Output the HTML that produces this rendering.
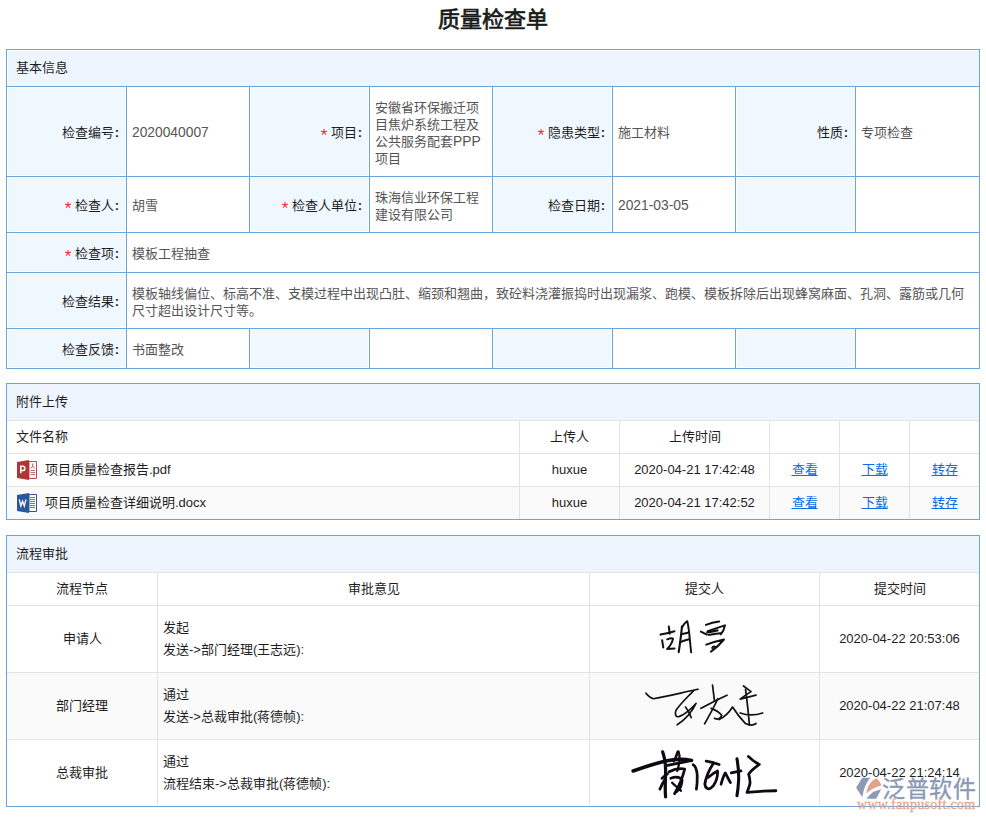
<!DOCTYPE html>
<html lang="zh-CN"><head><meta charset="utf-8"><title>质量检查单</title>
<style>
html,body{margin:0;padding:0;background:#fff}
body{width:986px;height:821px;position:relative;overflow:hidden;font-family:"Liberation Sans",sans-serif;font-size:13px;color:#333}
body>div,body>svg{position:absolute;box-sizing:border-box}
.c{display:flex;align-items:center}
.c span{display:block}
.s{display:inline-block;vertical-align:0;margin-right:4px;position:relative;top:-2px}
i.cl{font-style:normal;font-weight:bold;margin:0 7px 0 1px}
i.l{font-style:normal}
u{text-decoration:underline}
.title{left:0;top:1px;width:986px;height:40px;line-height:38px;text-align:center;font-size:22px;font-weight:normal;color:#1a1a1a;-webkit-text-stroke:0.7px #1a1a1a}
</style></head><body>
<div class="title">质量检查单</div>
<div style="left:8px;top:51px;width:971px;height:35px;background:#eef5ff;"></div>
<div class="c" style="left:7px;top:49px;width:972px;height:36px;padding:0 6px 0 9px;justify-content:flex-start;text-align:left;color:#1e1e1e;line-height:17px;"><span>基本信息</span></div>
<div style="left:8px;top:88px;width:117px;height:87px;background:#f0f8ff;"></div>
<div style="left:251px;top:88px;width:117px;height:87px;background:#f0f8ff;"></div>
<div style="left:494px;top:88px;width:117px;height:87px;background:#f0f8ff;"></div>
<div style="left:737px;top:88px;width:117px;height:87px;background:#f0f8ff;"></div>
<div style="left:8px;top:178px;width:117px;height:53px;background:#f0f8ff;"></div>
<div style="left:251px;top:178px;width:117px;height:53px;background:#f0f8ff;"></div>
<div style="left:494px;top:178px;width:117px;height:53px;background:#f0f8ff;"></div>
<div style="left:737px;top:178px;width:117px;height:53px;background:#f0f8ff;"></div>
<div style="left:8px;top:330px;width:117px;height:37px;background:#f0f8ff;"></div>
<div style="left:251px;top:330px;width:117px;height:37px;background:#f0f8ff;"></div>
<div style="left:494px;top:330px;width:117px;height:37px;background:#f0f8ff;"></div>
<div style="left:737px;top:330px;width:117px;height:37px;background:#f0f8ff;"></div>
<div style="left:8px;top:234px;width:117px;height:37px;background:#f0f8ff;"></div>
<div style="left:8px;top:274px;width:117px;height:53px;background:#f0f8ff;"></div>
<div style="left:6px;top:86px;width:974px;height:1px;background:#6aa6da;"></div>
<div style="left:6px;top:176px;width:974px;height:1px;background:#6aa6da;"></div>
<div style="left:6px;top:232px;width:974px;height:1px;background:#6aa6da;"></div>
<div style="left:6px;top:272px;width:974px;height:1px;background:#6aa6da;"></div>
<div style="left:6px;top:328px;width:974px;height:1px;background:#6aa6da;"></div>
<div style="left:126px;top:86px;width:1px;height:147px;background:#6aa6da;"></div>
<div style="left:126px;top:328px;width:1px;height:41px;background:#6aa6da;"></div>
<div style="left:249px;top:86px;width:1px;height:147px;background:#6aa6da;"></div>
<div style="left:249px;top:328px;width:1px;height:41px;background:#6aa6da;"></div>
<div style="left:369px;top:86px;width:1px;height:147px;background:#6aa6da;"></div>
<div style="left:369px;top:328px;width:1px;height:41px;background:#6aa6da;"></div>
<div style="left:492px;top:86px;width:1px;height:147px;background:#6aa6da;"></div>
<div style="left:492px;top:328px;width:1px;height:41px;background:#6aa6da;"></div>
<div style="left:612px;top:86px;width:1px;height:147px;background:#6aa6da;"></div>
<div style="left:612px;top:328px;width:1px;height:41px;background:#6aa6da;"></div>
<div style="left:735px;top:86px;width:1px;height:147px;background:#6aa6da;"></div>
<div style="left:735px;top:328px;width:1px;height:41px;background:#6aa6da;"></div>
<div style="left:855px;top:86px;width:1px;height:147px;background:#6aa6da;"></div>
<div style="left:855px;top:328px;width:1px;height:41px;background:#6aa6da;"></div>
<div style="left:126px;top:232px;width:1px;height:97px;background:#6aa6da;"></div>
<div style="left:6px;top:49px;width:974px;height:1px;background:#6aa6da;"></div>
<div style="left:6px;top:368px;width:974px;height:1px;background:#6aa6da;"></div>
<div style="left:6px;top:49px;width:1px;height:320px;background:#6aa6da;"></div>
<div style="left:979px;top:49px;width:1px;height:320px;background:#6aa6da;"></div>
<div class="c" style="left:7px;top:88px;width:119px;height:89px;padding:0 0px 0 6px;justify-content:flex-end;text-align:right;color:#1e1e1e;line-height:17px;"><span>检查编号<i class="cl"><i class="l" style="font-size:13px">:</i></i></span></div>
<div class="c" style="left:127px;top:88px;width:122px;height:89px;padding:0 6px 0 5px;justify-content:flex-start;text-align:left;color:#555;line-height:17px;"><span><i class="l" style="font-size:13.8px">2020040007</i></span></div>
<div class="c" style="left:250px;top:88px;width:119px;height:89px;padding:0 0px 0 6px;justify-content:flex-end;text-align:right;color:#1e1e1e;line-height:17px;"><span><svg class="s" width="6" height="6" viewBox="0 0 12 12"><path d="M6 0.5V6 M6 6L11.2 4.3 M6 6L9.2 10.6 M6 6L2.8 10.6 M6 6L0.8 4.3" stroke="#ff2a2a" stroke-width="2.2" stroke-linecap="round"/></svg>项目<i class="cl"><i class="l" style="font-size:13px">:</i></i></span></div>
<div class="c" style="left:370px;top:88px;width:122px;height:89px;padding:0 6px 0 5px;justify-content:flex-start;text-align:left;color:#555;line-height:17px;"><span>安徽省环保搬迁项目焦炉系统工程及公共服务配套<i class="l" style="font-size:13.8px">PPP</i>项目</span></div>
<div class="c" style="left:493px;top:88px;width:119px;height:89px;padding:0 0px 0 6px;justify-content:flex-end;text-align:right;color:#1e1e1e;line-height:17px;"><span><svg class="s" width="6" height="6" viewBox="0 0 12 12"><path d="M6 0.5V6 M6 6L11.2 4.3 M6 6L9.2 10.6 M6 6L2.8 10.6 M6 6L0.8 4.3" stroke="#ff2a2a" stroke-width="2.2" stroke-linecap="round"/></svg>隐患类型<i class="cl"><i class="l" style="font-size:13px">:</i></i></span></div>
<div class="c" style="left:613px;top:88px;width:122px;height:89px;padding:0 6px 0 5px;justify-content:flex-start;text-align:left;color:#555;line-height:17px;"><span>施工材料</span></div>
<div class="c" style="left:736px;top:88px;width:119px;height:89px;padding:0 0px 0 6px;justify-content:flex-end;text-align:right;color:#1e1e1e;line-height:17px;"><span>性质<i class="cl"><i class="l" style="font-size:13px">:</i></i></span></div>
<div class="c" style="left:856px;top:88px;width:123px;height:89px;padding:0 6px 0 5px;justify-content:flex-start;text-align:left;color:#555;line-height:17px;"><span>专项检查</span></div>
<div class="c" style="left:7px;top:178px;width:119px;height:55px;padding:0 0px 0 6px;justify-content:flex-end;text-align:right;color:#1e1e1e;line-height:17px;"><span><svg class="s" width="6" height="6" viewBox="0 0 12 12"><path d="M6 0.5V6 M6 6L11.2 4.3 M6 6L9.2 10.6 M6 6L2.8 10.6 M6 6L0.8 4.3" stroke="#ff2a2a" stroke-width="2.2" stroke-linecap="round"/></svg>检查人<i class="cl"><i class="l" style="font-size:13px">:</i></i></span></div>
<div class="c" style="left:127px;top:178px;width:122px;height:55px;padding:0 6px 0 5px;justify-content:flex-start;text-align:left;color:#555;line-height:17px;"><span>胡雪</span></div>
<div class="c" style="left:250px;top:178px;width:119px;height:55px;padding:0 0px 0 6px;justify-content:flex-end;text-align:right;color:#1e1e1e;line-height:17px;"><span><svg class="s" width="6" height="6" viewBox="0 0 12 12"><path d="M6 0.5V6 M6 6L11.2 4.3 M6 6L9.2 10.6 M6 6L2.8 10.6 M6 6L0.8 4.3" stroke="#ff2a2a" stroke-width="2.2" stroke-linecap="round"/></svg>检查人单位<i class="cl"><i class="l" style="font-size:13px">:</i></i></span></div>
<div class="c" style="left:370px;top:178px;width:122px;height:55px;padding:0 6px 0 5px;justify-content:flex-start;text-align:left;color:#555;line-height:17px;"><span>珠海信业环保工程建设有限公司</span></div>
<div class="c" style="left:493px;top:178px;width:119px;height:55px;padding:0 0px 0 6px;justify-content:flex-end;text-align:right;color:#1e1e1e;line-height:17px;"><span>检查日期<i class="cl"><i class="l" style="font-size:13px">:</i></i></span></div>
<div class="c" style="left:613px;top:178px;width:122px;height:55px;padding:0 6px 0 5px;justify-content:flex-start;text-align:left;color:#555;line-height:17px;"><span><i class="l" style="font-size:13.8px">2021-03-05</i></span></div>
<div class="c" style="left:7px;top:234px;width:119px;height:39px;padding:0 0px 0 6px;justify-content:flex-end;text-align:right;color:#1e1e1e;line-height:17px;"><span><svg class="s" width="6" height="6" viewBox="0 0 12 12"><path d="M6 0.5V6 M6 6L11.2 4.3 M6 6L9.2 10.6 M6 6L2.8 10.6 M6 6L0.8 4.3" stroke="#ff2a2a" stroke-width="2.2" stroke-linecap="round"/></svg>检查项<i class="cl"><i class="l" style="font-size:13px">:</i></i></span></div>
<div class="c" style="left:127px;top:234px;width:852px;height:39px;padding:0 6px 0 5px;justify-content:flex-start;text-align:left;color:#555;line-height:17px;"><span>模板工程抽查</span></div>
<div class="c" style="left:7px;top:274px;width:119px;height:55px;padding:0 0px 0 6px;justify-content:flex-end;text-align:right;color:#1e1e1e;line-height:17px;"><span>检查结果<i class="cl"><i class="l" style="font-size:13px">:</i></i></span></div>
<div class="c" style="left:127px;top:274px;width:852px;height:55px;padding:0 6px 0 5px;justify-content:flex-start;text-align:left;color:#555;line-height:17px;"><span>模板轴线偏位、标高不准、支模过程中出现凸肚、缩颈和翘曲，致砼料浇灌振捣时出现漏浆、跑模、模板拆除后出现蜂窝麻面、孔洞、露筋或几何尺寸超出设计尺寸等。</span></div>
<div class="c" style="left:7px;top:330px;width:119px;height:39px;padding:0 0px 0 6px;justify-content:flex-end;text-align:right;color:#1e1e1e;line-height:17px;"><span>检查反馈<i class="cl"><i class="l" style="font-size:13px">:</i></i></span></div>
<div class="c" style="left:127px;top:330px;width:122px;height:39px;padding:0 6px 0 5px;justify-content:flex-start;text-align:left;color:#555;line-height:17px;"><span>书面整改</span></div>
<div style="left:7px;top:384px;width:972px;height:36px;background:#eef5ff;"></div>
<div class="c" style="left:7px;top:383px;width:972px;height:36px;padding:0 6px 0 9px;justify-content:flex-start;text-align:left;color:#1e1e1e;line-height:17px;"><span>附件上传</span></div>
<div style="left:7px;top:487px;width:972px;height:32px;background:#fafafa;"></div>
<div style="left:7px;top:420px;width:972px;height:1px;background:#e3e3e3;"></div>
<div style="left:7px;top:453px;width:972px;height:1px;background:#e3e3e3;"></div>
<div style="left:7px;top:486px;width:972px;height:1px;background:#e3e3e3;"></div>
<div style="left:519px;top:421px;width:1px;height:98px;background:#e3e3e3;"></div>
<div style="left:619px;top:421px;width:1px;height:98px;background:#e3e3e3;"></div>
<div style="left:769px;top:421px;width:1px;height:98px;background:#e3e3e3;"></div>
<div style="left:839px;top:421px;width:1px;height:98px;background:#e3e3e3;"></div>
<div style="left:909px;top:421px;width:1px;height:98px;background:#e3e3e3;"></div>
<div style="left:6px;top:383px;width:974px;height:1px;background:#6aa6da;"></div>
<div style="left:6px;top:519px;width:974px;height:1px;background:#6aa6da;"></div>
<div style="left:6px;top:383px;width:1px;height:137px;background:#6aa6da;"></div>
<div style="left:979px;top:383px;width:1px;height:137px;background:#6aa6da;"></div>
<div class="c" style="left:7px;top:420px;width:512px;height:32px;padding:0 6px 0 9px;justify-content:flex-start;text-align:left;color:#1e1e1e;line-height:17px;"><span>文件名称</span></div>
<div class="c" style="left:520px;top:420px;width:99px;height:32px;padding:0 0px 0 0px;justify-content:center;text-align:center;color:#1e1e1e;line-height:17px;"><span>上传人</span></div>
<div class="c" style="left:620px;top:420px;width:149px;height:32px;padding:0 0px 0 0px;justify-content:center;text-align:center;color:#1e1e1e;line-height:17px;"><span>上传时间</span></div>
<svg width="20" height="20" viewBox="0 0 20 20" style="position:absolute;left:17px;top:460px">
<path d="M12 1.5 H19.5 V18.5 H12 Z" fill="#fff" stroke="#c0504d" stroke-width="1"/>
<path d="M13.5 10.5 H18 M13.5 12.5 H18 M13.5 14.5 H18" stroke="#c46a6a" stroke-width="1"/>
<path d="M15.7 3.5 V6.5 M13.8 8 L15.7 6.5 L17.6 8" stroke="#c0504d" stroke-width="1" fill="none"/>
<path d="M0 2 L12 0 V20 L0 18 Z" fill="#ad3737"/>
<path d="M3.8 13.2 V6.3 H5.8 Q7.8 6.3 7.8 8.4 Q7.8 10.5 5.8 10.5 H4.5" stroke="#fff" stroke-width="1.5" fill="none"/>
</svg>
<svg width="20" height="20" viewBox="0 0 20 20" style="position:absolute;left:17px;top:493px">
<path d="M12 1.5 H19.5 V18.5 H12 Z" fill="#fff" stroke="#2b579a" stroke-width="1"/>
<path d="M13 4.5 H18 M13 6.5 H18 M13 8.5 H18 M13 10.5 H18 M13 12.5 H18 M13 14.5 H18" stroke="#5a7bb5" stroke-width="1"/>
<path d="M0 2 L12 0 V20 L0 18 Z" fill="#2b579a"/>
<path d="M2.3 6.5 L3.9 13 L5.6 8.2 L7.3 13 L8.9 6.5" stroke="#fff" stroke-width="1.3" fill="none"/>
</svg>
<div class="c" style="left:7px;top:453px;width:512px;height:32px;padding:0 6px 0 38px;justify-content:flex-start;text-align:left;color:#1e1e1e;line-height:17px;"><span>项目质量检查报告<i class="l" style="font-size:13px">.pdf</i></span></div>
<div class="c" style="left:520px;top:453px;width:99px;height:32px;padding:0 0px 0 0px;justify-content:center;text-align:center;color:#1e1e1e;line-height:17px;"><span><i class="l" style="font-size:13px">huxue</i></span></div>
<div class="c" style="left:620px;top:453px;width:149px;height:32px;padding:0 0px 0 0px;justify-content:center;text-align:center;color:#1e1e1e;line-height:17px;"><span><i class="l" style="font-size:13px">2020-04-21 17:42:48</i></span></div>
<div class="c" style="left:770px;top:453px;width:69px;height:32px;padding:0 0px 0 0px;justify-content:center;text-align:center;color:#0a6ee4;line-height:17px;"><span><u>查看</u></span></div>
<div class="c" style="left:840px;top:453px;width:69px;height:32px;padding:0 0px 0 0px;justify-content:center;text-align:center;color:#0a6ee4;line-height:17px;"><span><u>下载</u></span></div>
<div class="c" style="left:910px;top:453px;width:69px;height:32px;padding:0 0px 0 0px;justify-content:center;text-align:center;color:#0a6ee4;line-height:17px;"><span><u>转存</u></span></div>
<div class="c" style="left:7px;top:486px;width:512px;height:32px;padding:0 6px 0 38px;justify-content:flex-start;text-align:left;color:#1e1e1e;line-height:17px;"><span>项目质量检查详细说明<i class="l" style="font-size:13px">.docx</i></span></div>
<div class="c" style="left:520px;top:486px;width:99px;height:32px;padding:0 0px 0 0px;justify-content:center;text-align:center;color:#1e1e1e;line-height:17px;"><span><i class="l" style="font-size:13px">huxue</i></span></div>
<div class="c" style="left:620px;top:486px;width:149px;height:32px;padding:0 0px 0 0px;justify-content:center;text-align:center;color:#1e1e1e;line-height:17px;"><span><i class="l" style="font-size:13px">2020-04-21 17:42:52</i></span></div>
<div class="c" style="left:770px;top:486px;width:69px;height:32px;padding:0 0px 0 0px;justify-content:center;text-align:center;color:#0a6ee4;line-height:17px;"><span><u>查看</u></span></div>
<div class="c" style="left:840px;top:486px;width:69px;height:32px;padding:0 0px 0 0px;justify-content:center;text-align:center;color:#0a6ee4;line-height:17px;"><span><u>下载</u></span></div>
<div class="c" style="left:910px;top:486px;width:69px;height:32px;padding:0 0px 0 0px;justify-content:center;text-align:center;color:#0a6ee4;line-height:17px;"><span><u>转存</u></span></div>
<div style="left:7px;top:536px;width:972px;height:36px;background:#eef5ff;"></div>
<div class="c" style="left:7px;top:535px;width:972px;height:36px;padding:0 6px 0 9px;justify-content:flex-start;text-align:left;color:#1e1e1e;line-height:17px;"><span>流程审批</span></div>
<div style="left:7px;top:673px;width:972px;height:66px;background:#fafafa;"></div>
<div style="left:7px;top:572px;width:972px;height:1px;background:#e3e3e3;"></div>
<div style="left:7px;top:605px;width:972px;height:1px;background:#e3e3e3;"></div>
<div style="left:7px;top:672px;width:972px;height:1px;background:#e3e3e3;"></div>
<div style="left:7px;top:739px;width:972px;height:1px;background:#e3e3e3;"></div>
<div style="left:157px;top:573px;width:1px;height:233px;background:#e3e3e3;"></div>
<div style="left:589px;top:573px;width:1px;height:233px;background:#e3e3e3;"></div>
<div style="left:819px;top:573px;width:1px;height:233px;background:#e3e3e3;"></div>
<div style="left:6px;top:535px;width:974px;height:1px;background:#6aa6da;"></div>
<div style="left:6px;top:806px;width:974px;height:1px;background:#6aa6da;"></div>
<div style="left:6px;top:535px;width:1px;height:272px;background:#6aa6da;"></div>
<div style="left:979px;top:535px;width:1px;height:272px;background:#6aa6da;"></div>
<div class="c" style="left:7px;top:572px;width:150px;height:32px;padding:0 0px 0 0px;justify-content:center;text-align:center;color:#1e1e1e;line-height:17px;"><span>流程节点</span></div>
<div class="c" style="left:158px;top:572px;width:431px;height:32px;padding:0 0px 0 0px;justify-content:center;text-align:center;color:#1e1e1e;line-height:17px;"><span>审批意见</span></div>
<div class="c" style="left:590px;top:572px;width:229px;height:32px;padding:0 0px 0 0px;justify-content:center;text-align:center;color:#1e1e1e;line-height:17px;"><span>提交人</span></div>
<div class="c" style="left:820px;top:572px;width:159px;height:32px;padding:0 0px 0 0px;justify-content:center;text-align:center;color:#1e1e1e;line-height:17px;"><span>提交时间</span></div>
<div class="c" style="left:7px;top:605px;width:150px;height:66px;padding:0 0px 0 0px;justify-content:center;text-align:center;color:#1e1e1e;line-height:17px;"><span>申请人</span></div>
<div class="c" style="left:158px;top:606px;width:431px;height:66px;padding:0 6px 0 5px;justify-content:flex-start;text-align:left;color:#1e1e1e;line-height:22px;"><span>发起<br>发送<i class="l" style="font-size:13px">-&gt;</i>部门经理<i class="l" style="font-size:13px">(</i>王志远<i class="l" style="font-size:13px">):</i></span></div>
<div class="c" style="left:820px;top:605px;width:159px;height:66px;padding:0 0px 0 0px;justify-content:center;text-align:center;color:#1e1e1e;line-height:17px;"><span><i class="l" style="font-size:13px">2020-04-22 20:53:06</i></span></div>
<div class="c" style="left:7px;top:672px;width:150px;height:66px;padding:0 0px 0 0px;justify-content:center;text-align:center;color:#1e1e1e;line-height:17px;"><span>部门经理</span></div>
<div class="c" style="left:158px;top:673px;width:431px;height:66px;padding:0 6px 0 5px;justify-content:flex-start;text-align:left;color:#1e1e1e;line-height:22px;"><span>通过<br>发送<i class="l" style="font-size:13px">-&gt;</i>总裁审批<i class="l" style="font-size:13px">(</i>蒋德帧<i class="l" style="font-size:13px">):</i></span></div>
<div class="c" style="left:820px;top:672px;width:159px;height:66px;padding:0 0px 0 0px;justify-content:center;text-align:center;color:#1e1e1e;line-height:17px;"><span><i class="l" style="font-size:13px">2020-04-22 21:07:48</i></span></div>
<div class="c" style="left:7px;top:739px;width:150px;height:66px;padding:0 0px 0 0px;justify-content:center;text-align:center;color:#1e1e1e;line-height:17px;"><span>总裁审批</span></div>
<div class="c" style="left:158px;top:740px;width:431px;height:66px;padding:0 6px 0 5px;justify-content:flex-start;text-align:left;color:#1e1e1e;line-height:22px;"><span>通过<br>流程结束<i class="l" style="font-size:13px">-&gt;</i>总裁审批<i class="l" style="font-size:13px">(</i>蒋德帧<i class="l" style="font-size:13px">):</i></span></div>
<div class="c" style="left:820px;top:739px;width:159px;height:66px;padding:0 0px 0 0px;justify-content:center;text-align:center;color:#1e1e1e;line-height:17px;"><span><i class="l" style="font-size:13px">2020-04-22 21:24:14</i></span></div>
<svg style="left:655px;top:615px" width="80" height="45" viewBox="0 0 986 555" fill="none" stroke="#111" stroke-linecap="round" stroke-linejoin="round">
<g stroke-width="25">
<path d="M68 242 C110 236 170 222 240 200"/>
<path d="M170 142 C174 170 178 200 180 232"/>
<path d="M88 312 C92 340 96 370 102 400"/>
<path d="M150 300 C180 288 210 280 222 292 C215 330 190 380 150 420 C180 420 210 418 240 414"/>
<path d="M332 140 C325 230 310 340 292 458" stroke-width="26"/>
<path d="M335 150 C360 110 380 80 398 78 C415 150 425 250 432 330 C438 390 442 430 446 460" stroke-width="24"/>
<path d="M325 238 C350 232 380 224 405 218"/>
<path d="M312 335 C350 322 385 310 418 300"/>
<path d="M628 122 C680 100 740 86 792 80"/>
<path d="M566 205 C590 218 615 230 640 242"/>
<path d="M650 200 C720 175 800 148 862 128 C855 170 840 205 810 238"/>
<path d="M645 215 C690 205 730 198 770 190" stroke-width="28"/>
<path d="M665 245 C710 238 760 230 805 226"/>
<path d="M632 365 C700 340 780 318 850 302 C810 350 750 410 690 452 M705 405 C715 385 735 385 742 400"/>
</g>
</svg>
<svg style="left:640px;top:680px" width="130" height="50" viewBox="0 0 986 379" fill="none" stroke="#111" stroke-linecap="round" stroke-linejoin="round">
<g stroke-width="13">
<path d="M45 100 C60 118 75 135 100 142 C200 125 320 95 440 70 C425 72 410 76 400 80"/>
<path d="M405 82 C360 130 300 185 272 232 C262 262 272 282 295 278 C340 262 385 222 425 178 C400 230 345 300 282 340"/>
<path d="M345 205 C365 230 380 260 388 285"/>
<path d="M550 38 C555 80 560 120 565 158"/>
<path d="M462 215 C520 185 590 145 660 115"/>
<path d="M590 142 C565 200 530 260 490 332"/>
<path d="M540 215 C575 228 605 248 620 268 C610 292 590 305 565 290"/>
<path d="M600 300 C635 285 670 255 702 205 C730 250 760 290 800 330 C830 345 860 345 880 330"/>
<path d="M785 45 C805 60 825 75 842 88 C815 105 785 125 760 145 C800 135 840 125 880 115"/>
<path d="M800 70 C810 140 820 230 830 340"/>
<path d="M760 250 C810 268 870 270 930 250"/>
</g>
</svg>
<svg style="left:625px;top:745px" width="160" height="55" viewBox="0 0 986 339" fill="none" stroke="#0d0a14" stroke-linecap="round" stroke-linejoin="round">
<g stroke-width="17">
<path d="M50 160 C100 142 170 118 250 98 C310 86 360 84 410 95" stroke-width="22"/>
<path d="M232 42 C245 80 252 130 250 180 C248 230 246 280 250 320" stroke-width="20"/>
<path d="M325 42 C318 65 310 85 300 100"/>
<path d="M330 40 C340 70 338 110 322 160" stroke-width="14"/>
<path d="M290 232 C310 250 330 270 345 282" stroke-width="14"/>
<path d="M262 125 C300 118 350 108 400 98"/>
<path d="M272 165 C300 150 330 142 368 148 C355 200 335 250 305 300"/>
<path d="M228 205 C240 195 250 185 262 178"/>
<path d="M215 272 C225 250 235 230 245 215"/>
<path d="M282 205 C310 195 335 195 352 215 C350 250 335 275 318 288"/>
<path d="M420 122 C435 130 442 150 445 185 C446 220 444 250 440 272"/>
<path d="M500 100 C530 105 555 112 580 120"/>
<path d="M545 112 C520 150 500 190 492 240 C495 275 520 280 545 250 C565 220 572 185 570 160 C550 170 530 185 512 200"/>
<path d="M592 242 C600 210 610 185 618 172 C630 195 640 215 650 232"/>
<path d="M690 85 C698 130 702 180 700 220 C698 260 694 290 690 312" stroke-width="19"/>
<path d="M655 172 C675 168 695 164 715 160"/>
<path d="M760 70 C780 90 800 105 828 120 C800 140 775 160 762 180 C768 200 772 220 770 240 C765 260 758 278 752 292 C800 288 860 282 930 282"/>
</g>
</svg>

<svg style="left:855px;top:776px" width="30" height="25" viewBox="0 0 30 25">
<path d="M7.2 1.7 L15.3 1.7 C11.5 6 8.5 13 7.4 21.2 L1.1 11.8 Z" fill="#8d9ab5"/>
<path d="M11.2 17.6 C12.5 10 16 4.5 21.8 2.3 C24 4.5 25.6 6.8 26.4 9.4 C20 11 15 13.5 11.2 17.6 Z" fill="#e0a28b"/>
<path d="M11.4 22.8 C14 19.5 16.5 17.2 19 15.6 L26.2 13.2 L21.2 22.8 Z" fill="#8d9ab5"/>
</svg>
<div style="left:882px;top:774px;font-size:23px;line-height:30px;letter-spacing:0.5px;color:#8b98b4;white-space:nowrap;-webkit-text-stroke:0.35px #8b98b4">泛普软件</div>
<div style="left:857px;top:797px;font-family:'Liberation Serif',serif;font-size:14px;line-height:16px;letter-spacing:0.3px;color:#e3a58e;white-space:nowrap;-webkit-text-stroke:0.3px #e3a58e">www.fanpusoft.com</div>

</body></html>
